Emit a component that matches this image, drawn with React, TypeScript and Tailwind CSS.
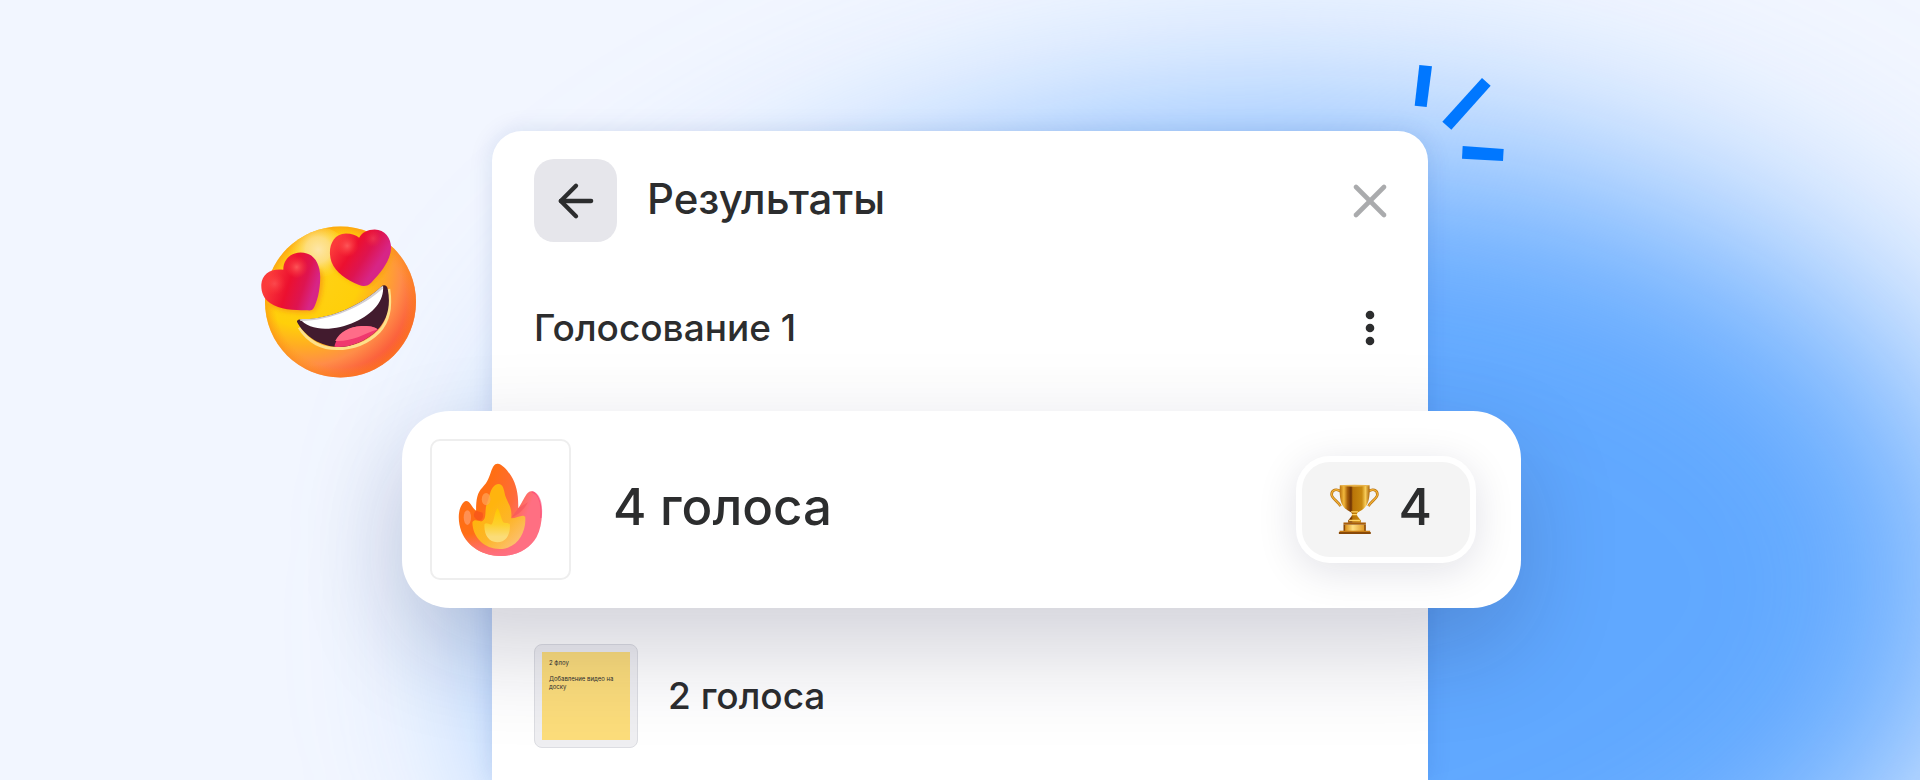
import { ArrowLeft, X } from 'lucide-react';

const HeartEyesEmoji = () => (
    <svg viewBox="60 44 472 462" className="w-[157px] h-[154px]" aria-hidden="true">
        <defs>
            <radialGradient id="face" gradientUnits="userSpaceOnUse" cx="190" cy="170" r="370">
                <stop offset="0" stopColor="#ffd21a" />
                <stop offset="0.48" stopColor="#ffcf0a" />
                <stop offset="0.64" stopColor="#ffad22" />
                <stop offset="0.8" stopColor="#ff8d48" />
                <stop offset="1" stopColor="#fa5038" />
            </radialGradient>
            <radialGradient id="rim" gradientUnits="userSpaceOnUse" cx="302" cy="275" r="228">
                <stop offset="0.86" stopColor="#ff9a10" stopOpacity="0" />
                <stop offset="1" stopColor="#fb8a14" stopOpacity="0.6" />
            </radialGradient>
            <radialGradient id="shine" gradientUnits="userSpaceOnUse" cx="235" cy="118" r="95">
                <stop offset="0" stopColor="#fde6a8" />
                <stop offset="0.4" stopColor="#fde08e" stopOpacity="0.85" />
                <stop offset="1" stopColor="#ffd21a" stopOpacity="0" />
            </radialGradient>
            <linearGradient id="heartLeft" gradientUnits="userSpaceOnUse" x1="90" y1="190" x2="240" y2="240">
                <stop offset="0" stopColor="#fb3a3a" />
                <stop offset="0.4" stopColor="#ec1030" />
                <stop offset="0.68" stopColor="#de1450" />
                <stop offset="0.9" stopColor="#d72586" />
            </linearGradient>
            <linearGradient id="heartRight" gradientUnits="userSpaceOnUse" x1="300" y1="80" x2="430" y2="165">
                <stop offset="0" stopColor="#fb3a3a" />
                <stop offset="0.35" stopColor="#ec1030" />
                <stop offset="0.62" stopColor="#de1450" />
                <stop offset="0.9" stopColor="#d72586" />
            </linearGradient>
            <radialGradient id="spot">
                <stop offset="0" stopColor="#ff5c5c" />
                <stop offset="1" stopColor="#ff3a3a" stopOpacity="0" />
            </radialGradient>
            <filter id="soft" x="-30%" y="-30%" width="160%" height="160%">
                <feGaussianBlur stdDeviation="6" />
            </filter>
            <clipPath id="mouthClip">
                <path d="M171 334C172 326 182 328 192 327C280 325 370 280 424 229C432 222 442 224 444 236C455 290 440 332 412 360C375 395 330 412 290 410C230 405 190 370 171 334Z" />
            </clipPath>
            <clipPath id="faceClip">
                <circle cx="302" cy="275" r="227" />
            </clipPath>
        </defs>
        <circle cx="302" cy="275" r="227" fill="url(#face)" />
        <circle cx="302" cy="275" r="227" fill="url(#rim)" />
        <g clipPath="url(#faceClip)">
            <ellipse cx="235" cy="125" rx="90" ry="75" fill="url(#shine)" />
            {/* shade under the hearts */}
            <g filter="url(#soft)" fill="#f79a12" opacity="0.75">
                <path d="M150 215C170 170 250 150 250 205C250 245 240 280 226 302C190 314 120 308 84 282Z" />
                <path d="M358 108C390 80 462 90 460 118C455 160 425 195 398 222C375 238 320 214 275 165Z" />
            </g>
        </g>
        {/* mouth */}
        <path d="M178 352C205 398 250 415 290 415C340 415 385 397 418 364C447 334 455 290 447 236" fill="none" stroke="#fde08a" strokeWidth="9" />
        <g clipPath="url(#mouthClip)">
            <rect x="165" y="215" width="290" height="200" fill="#421b2e" />
            <path d="M178 324C270 332 370 285 430 226C434 272 400 310 345 335C290 360 212 368 178 324Z" fill="#fff" />
            <path d="M182 332C275 332 372 288 430 234L424 226C365 278 275 325 178 325Z" fill="#d3cfd3" />
            <path d="M283 414C287 375 325 349 365 347C390 346 408 350 416 360C385 402 335 416 283 414Z" fill="#f0386e" />
            <path d="M286 392C300 364 330 349 365 347C390 346 408 350 414 357C370 372 340 394 286 392Z" fill="#ff6c88" />
        </g>
        {/* eyes */}
        <path d="M130 178C130 145 155 126 182 126C222 126 241 160 241 200C241 240 232 275 221 294C217 301 210 301 200 300C160 300 120 298 90 278C70 264 63 244 64 222C66 192 92 173 130 178Z" fill="url(#heartLeft)" />
        <path d="M358 82C366 66 384 57 405 57C436 58 455 84 454 114C452 150 425 185 395 216C385 227 372 229 358 224C320 210 287 185 275 155C262 118 275 70 318 69C336 69 350 74 358 82Z" fill="url(#heartRight)" />
        <circle cx="104" cy="220" r="34" fill="url(#spot)" opacity="0.6" />
        <circle cx="170" cy="170" r="34" fill="url(#spot)" opacity="0.9" />
        <circle cx="322" cy="106" r="34" fill="url(#spot)" opacity="0.9" />
        <circle cx="400" cy="84" r="26" fill="url(#spot)" opacity="0.4" />
    </svg>
);

const FireEmoji = () => (
    <svg viewBox="200 186 260 284" className="w-[87px] h-[95px]" aria-hidden="true">
        <defs>
            <linearGradient id="flameOuter" gradientUnits="userSpaceOnUse" x1="270" y1="330" x2="420" y2="385">
                <stop offset="0" stopColor="#ff6e14" />
                <stop offset="0.5" stopColor="#ff6b3a" />
                <stop offset="0.85" stopColor="#ff6f82" />
            </linearGradient>
            <linearGradient id="flameBottom" gradientUnits="userSpaceOnUse" x1="0" y1="400" x2="0" y2="467">
                <stop offset="0" stopColor="#ff6f82" stopOpacity="0" />
                <stop offset="1" stopColor="#ff6f82" />
            </linearGradient>
            <linearGradient id="flameMid" gradientUnits="userSpaceOnUse" x1="290" y1="330" x2="380" y2="430">
                <stop offset="0" stopColor="#ffb40e" />
                <stop offset="0.5" stopColor="#fdb52a" />
                <stop offset="1" stopColor="#fcc070" />
            </linearGradient>
            <linearGradient id="flameCore" gradientUnits="userSpaceOnUse" x1="0" y1="325" x2="0" y2="430">
                <stop offset="0" stopColor="#ffc800" />
                <stop offset="0.45" stopColor="#fdd02c" />
                <stop offset="0.8" stopColor="#fbdc78" />
            </linearGradient>
        </defs>
        <path d="M322 191C335 192 352 212 362 228C378 254 384 284 383 324C396 306 402 288 412 278C424 268 438 276 446 296C458 326 456 376 438 410C418 446 376 467 330 467C278 467 232 440 213 394C200 358 204 322 220 306C228 298 236 304 242 314C247 322 252 328 257 332C257 298 260 278 276 262C292 246 296 232 302 214C307 200 312 190 322 191Z" fill="url(#flameOuter)" />
        <path d="M213 394C232 440 278 467 330 467C376 467 418 446 438 410Z" fill="url(#flameBottom)" />
        <path d="M383 324C376 334 370 342 364 350C382 346 402 326 412 306Z" fill="#f44d5c" opacity="0.5" />
        <path d="M257 332C248 340 247 352 262 360C276 362 280 352 276 338Z" fill="#f4441e" opacity="0.5" />
        <path d="M324 252C338 252 340 268 344 286C352 310 366 322 362 354C380 354 396 340 404 350C408 400 376 446 328 446C282 446 246 410 246 366C252 356 262 362 272 364C290 358 282 336 288 314C298 290 300 254 324 252Z" fill="url(#flameMid)" />
        <path d="M321 324C328 332 330 350 338 366C346 370 350 366 358 372C360 404 346 426 320 426C294 426 280 402 282 372C288 364 298 376 304 372C312 358 312 336 321 324Z" fill="url(#flameCore)" />
        <ellipse cx="287" cy="297" rx="13" ry="18" fill="#ffa458" opacity="0.7" />
        <ellipse cx="231" cy="352" rx="11" ry="22" fill="#ff9862" opacity="0.8" />
        <path d="M425 275C450 284 454 320 451 352" fill="none" stroke="#fb3c70" strokeWidth="5" strokeLinecap="round" opacity="0.5" />
    </svg>
);

const TrophyEmoji = () => (
    <svg viewBox="14 16 149 153" className="w-[49px] h-[51px]" aria-hidden="true">
        <defs>
            <linearGradient id="cup" x1="0" x2="1">
                <stop offset="0" stopColor="#b8700c" />
                <stop offset="0.14" stopColor="#f3b93c" />
                <stop offset="0.26" stopColor="#a8600a" />
                <stop offset="0.38" stopColor="#6d3206" />
                <stop offset="0.44" stopColor="#b87408" />
                <stop offset="0.74" stopColor="#c98a10" />
                <stop offset="0.86" stopColor="#f8cc58" />
                <stop offset="1" stopColor="#a8640a" />
            </linearGradient>
            <linearGradient id="plate" x1="0" x2="1">
                <stop offset="0" stopColor="#d98e18" />
                <stop offset="0.4" stopColor="#ffdf80" />
                <stop offset="1" stopColor="#e09a28" />
            </linearGradient>
        </defs>
        <path d="M47 38C34 28 18 32 19 48C21 60 38 68 46 82" fill="none" stroke="#b06c0c" strokeWidth="8" />
        <path d="M47 38C34 28 18 32 19 48C21 60 38 68 46 82" fill="none" stroke="#f3b136" strokeWidth="4" />
        <path d="M130 38C143 28 159 32 158 48C156 60 139 68 131 82" fill="none" stroke="#b06c0c" strokeWidth="8" />
        <path d="M130 38C143 28 159 32 158 48C156 60 139 68 131 82" fill="none" stroke="#f3b136" strokeWidth="4" />
        <path d="M44 19H134C137 66 128 88 102 99C96 102 95 106 97 112L108 126V133H69V126L80 112C82 106 81 102 75 99C50 88 41 66 44 19Z" fill="url(#cup)" />
        <ellipse cx="89" cy="20" rx="45" ry="3" fill="#e8b34c" />
        <path d="M78 100H99M81 108H96M72 126H105" stroke="#ffd264" strokeWidth="4" />
        <rect x="55" y="132" width="68" height="6" fill="#a85d08" />
        <rect x="55" y="138" width="68" height="20" fill="#8a4a08" />
        <rect x="60" y="139" width="58" height="19" fill="url(#plate)" />
        <rect x="43" y="157" width="93" height="5" fill="#c87d16" />
        <rect x="41" y="161" width="97" height="6" fill="#874706" />
    </svg>
);

const Rays = () => (
    <svg viewBox="522 42 270 294" className="w-[90px] h-[98px]" fill="#0077ff" aria-hidden="true">
        <polygon points="538,45 576,49 560,171 524,167" />
        <polygon points="726,84 752,107 634,239 607,215" />
        <polygon points="668,288 791,297 789,333 666,326" />
    </svg>
);

const MoreDots = () => (
    <svg viewBox="0 0 32 40" className="w-8 h-10" fill="#2c2d2e" aria-hidden="true">
        <circle cx="16" cy="7" r="4.3" />
        <circle cx="16" cy="20" r="4.3" />
        <circle cx="16" cy="33" r="4.3" />
    </svg>
);

export default function App() {
    return (
        <main className="relative min-h-screen overflow-hidden bg-[#f2f6ff] flex flex-col items-center px-[132px] pt-[131px] font-['Inter',sans-serif] font-medium text-[#2c2d2e]">
            {/* Background glow */}
            <div className="absolute left-[28%] top-[136px] w-[76%] h-[940px] rounded-[50%] -rotate-3 bg-[#60a8ff] blur-[110px]" />

            <section className="relative flex-1 flex flex-col w-full max-w-[936px] rounded-t-[30px] bg-white px-[42px] pt-7 shadow-[0_0_24px_rgba(0,50,130,0.12)]">
                <div className="absolute -left-[232px] top-[94px]">
                    <HeartEyesEmoji />
                </div>
                <div className="absolute -right-[76px] -top-[67px]">
                    <Rays />
                </div>

                <header className="flex items-center">
                    <button type="button" aria-label="Назад" className="flex items-center justify-center size-[83px] rounded-[20px] bg-[#e6e6eb]">
                        <ArrowLeft className="size-[52px]" strokeWidth={2} />
                    </button>
                    <h1 className="ml-[30px] pb-1 text-[42px] leading-[52px]">Результаты</h1>
                    <button type="button" aria-label="Закрыть" className="ml-auto -mr-3 text-[#aaabad]">
                        <X className="size-14" strokeWidth={2} />
                    </button>
                </header>

                <div className="mt-[54px] flex h-16 items-center justify-between">
                    <h2 className="text-[37px] leading-[48px]">Голосование 1</h2>
                    <button type="button" aria-label="Меню">
                        <MoreDots />
                    </button>
                </div>

                <ul className="mt-[51px]">
                    <li className="relative z-10 -ml-[132px] -mr-[135px] flex items-center rounded-[48px] bg-white p-7 pr-[45px] shadow-[0_40px_100px_rgba(20,20,60,0.2)]">
                        <div className="flex items-center justify-center size-[141px] rounded-[10px] border-2 border-[#eeeeee]">
                            <FireEmoji />
                        </div>
                        <span className="ml-[42px] pb-1.5 text-[51px] leading-[60px]">4 голоса</span>
                        <div className="ml-auto flex h-[107px] items-center gap-5 rounded-[34px] border-[6px] border-white bg-[#f4f4f4] pl-7 pr-[38px] shadow-[0_8px_40px_rgba(20,20,60,0.12)]">
                            <TrophyEmoji />
                            <span className="pb-1.5 text-[51px] leading-[60px]">4</span>
                        </div>
                    </li>
                    <li className="mt-9 flex items-center">
                        <div className="size-[104px] rounded-lg border border-[#dcdde2] bg-[#efeff2] p-[7px]">
                            <p className="h-full bg-[#fcdd7b] px-[7px] pt-[7px] text-[6px] leading-[8px] font-normal">
                                2 флоу
                                <br />
                                <br />
                                Добавление видео на доску
                            </p>
                        </div>
                        <span className="ml-[30px] text-[37px] leading-[48px]">2 голоса</span>
                    </li>
                </ul>
            </section>
        </main>
    );
}
